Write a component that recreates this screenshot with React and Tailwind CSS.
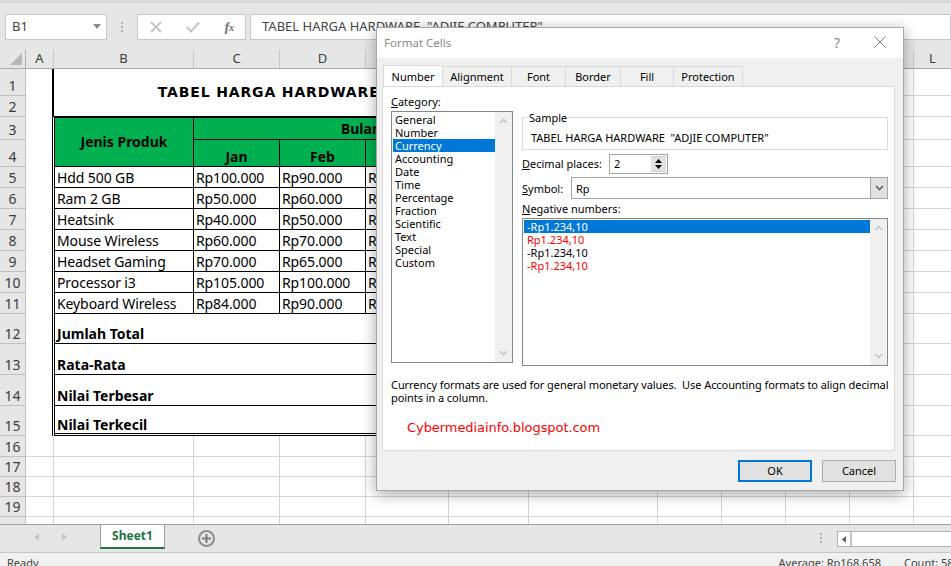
import React from "react";

const SHEET = { fontFamily: '"Noto Sans", sans-serif' };

const products = [
  ["Hdd 500 GB", "Rp100.000", "Rp90.000", "Rp80.000", "Rp85.000"],
  ["Ram 2 GB", "Rp50.000", "Rp60.000", "Rp70.000", "Rp65.000"],
  ["Heatsink", "Rp40.000", "Rp50.000", "Rp45.000", "Rp40.000"],
  ["Mouse Wireless", "Rp60.000", "Rp70.000", "Rp65.000", "Rp60.000"],
  ["Headset Gaming", "Rp70.000", "Rp65.000", "Rp60.000", "Rp70.000"],
  ["Processor i3", "Rp105.000", "Rp100.000", "Rp95.000", "Rp90.000"],
  ["Keyboard Wireless", "Rp84.000", "Rp90.000", "Rp85.000", "Rp80.000"],
];
const totals = ["Jumlah Total", "Rata-Rata", "Nilai Terbesar", "Nilai Terkecil"];
const cols = ["A", "B", "C", "D", "E", "F", "G", "H", "I", "J", "K", "L"];
const categories = ["General", "Number", "Currency", "Accounting", "Date", "Time", "Percentage", "Fraction", "Scientific", "Text", "Special", "Custom"];

const grid = "border-r border-b border-[#d4d4d4]";
const RowHead = ({ n }) => (
  <div className={`bg-[#e6e6e6] border-r border-b border-[#c0c0c0] flex justify-center text-[14px] leading-[19px] text-[#3c3c3c] overflow-hidden ${n === 20 ? "items-start pt-[3px]" : "items-end"}`}>{n}</div>
);
const ABlank = () => <div className="border-r border-white shadow-[inset_-1px_0_0_black]" />;
const Blank = () => <div className={grid} />;
const Blanks = ({ n }) => Array.from({ length: n }, (_, i) => <Blank key={i} />);
const Chevron = ({ up, color = "#c4c4c4" }) => (
  <svg width="9" height="6" viewBox="0 0 9 6" fill="none" stroke={color} strokeWidth="1.6">
    <path d={up ? "M1 5 L4.5 1.5 L8 5" : "M1 1 L4.5 4.5 L8 1"} />
  </svg>
);
const Scroll = () => (
  <div className="w-[17px] bg-[#f0f0f0] flex flex-col justify-between items-center py-[6px] shrink-0">
    <Chevron up />
    <Chevron />
  </div>
);

function Sheet() {
  return (
    <div className="grid flex-1 overflow-hidden grid-cols-[26px_28px_140px_86px_86px_83px_80px_129px_64px_64px_64px_64px_38px] grid-rows-[19px_27px_21px_23px_27px_21px_21px_21px_21px_21px_21px_21px_30px_31px_31px_30px_21px_20px_20px_20px_8px]" style={SHEET}>
      <div className="bg-[#e6e6e6] border-r border-b border-[#b0b0b0] flex items-end justify-end pr-[3px] pb-[3px]">
        <svg width="12" height="12" viewBox="0 0 12 12"><path d="M12 0V12H0Z" fill="#b7b7b7" /></svg>
      </div>
      {cols.map((c) => (
        <div key={c} className="bg-[#e6e6e6] border-r border-b border-b-[#a8a8a8] border-r-[#c6c6c6] flex items-center justify-center text-[13px] text-[#3c3c3c]">{c}</div>
      ))}

      <RowHead n={1} />
      <div className="border-r border-black shadow-[inset_-1px_0_0_black]" />
      <div className="col-span-6 row-span-2 bg-white border-b border-black flex items-center justify-center text-[14px] font-bold tracking-[0.85px] text-black whitespace-pre" style={{ fontFamily: '"DejaVu Sans", sans-serif' }}>TABEL HARGA HARDWARE  "ADJIE COMPUTER"</div>
      <Blanks n={5} />
      <RowHead n={2} />
      <div className="border-r border-black shadow-[inset_-1px_0_0_black]" />
      <Blanks n={5} />

      <RowHead n={3} />
      <ABlank />
      <div className="row-span-2 bg-[#00b050] border-l border-t border-r border-b border-black flex items-center justify-center pb-[2px] text-[14px] font-bold text-black">Jenis Produk</div>
      <div className="col-span-4 bg-[#00b050] border-t border-r border-b border-black flex items-center justify-center text-[14px] font-bold text-black">Bulan</div>
      <Blanks n={6} />

      <RowHead n={4} />
      <ABlank />
      {["Jan", "Feb", "Mar", "Apr"].map((m) => (
        <div key={m} className="bg-[#00b050] border-r border-b border-black flex items-end justify-center text-[14px] font-bold leading-[19px] text-black">{m}</div>
      ))}
      <Blanks n={6} />

      {products.map((p, i) => (
        <React.Fragment key={p[0]}>
          <RowHead n={5 + i} />
          <ABlank />
          {p.map((v, j) => (
            <div key={j} className={`border-r border-b border-black flex items-end pl-[2px] text-[14px] leading-[18px] tracking-[-0.1px] text-black whitespace-nowrap overflow-hidden ${j === 0 ? "border-l" : ""}`}>{v}</div>
          ))}
          <Blanks n={6} />
        </React.Fragment>
      ))}

      {totals.map((t, i) => (
        <React.Fragment key={t}>
          <RowHead n={12 + i} />
          <ABlank />
          <div className={`col-span-5 border-l border-r border-b border-black flex items-end pl-[2px] text-[14px] font-bold leading-[18px] text-black ${i === 3 ? "shadow-[inset_0_-1px_0_white,inset_0_-2px_0_black] pb-[1px]" : ""}`}>{t}</div>
          <Blanks n={6} />
        </React.Fragment>
      ))}

      {[16, 17, 18, 19, 20].map((n) => (
        <React.Fragment key={n}>
          <RowHead n={n} />
          <Blanks n={12} />
        </React.Fragment>
      ))}
    </div>
  );
}

function Dialog() {
  return (
    <div className="absolute left-[376px] top-[27px] w-[528px] h-[464px] bg-[#f0f0f0] border border-[#a6a6a6] shadow-[0_3px_14px_rgba(0,0,0,0.35)] flex flex-col text-[11px] leading-[13px] text-black" style={SHEET}>
      <div className="h-[30px] bg-white flex items-center shrink-0 pl-[7px] pr-[17px] pb-[2px]">
        <span className="text-[11.5px] text-[#8a8a8a]">Format Cells</span>
        <span className="ml-auto mr-[34px] text-[14px] text-[#8a8a8a]">?</span>
        <svg width="12" height="12" viewBox="0 0 12 12" stroke="#808080" fill="none"><path d="M0.5 0.5 L11.5 11.5 M11.5 0.5 L0.5 11.5" /></svg>
      </div>
      <div className="flex ml-[6px] mt-[8px] h-[20px] shrink-0">
        <div className="w-[60px] h-[21px] -mt-[1px] bg-white border border-b-0 border-[#d9d9d9] flex items-center justify-center z-10">Number</div>
        {[["Alignment", "w-[69px]"], ["Font", "w-[54px]"], ["Border", "w-[55px]"], ["Fill", "w-[53px]"], ["Protection", "w-[69px]"]].map(([t, w]) => (
          <div key={t} className={`${w} border border-l-0 border-b-0 border-[#d9d9d9] flex items-center justify-center`}>{t}</div>
        ))}
      </div>
      <div className="ml-[5px] w-[513px] h-[365px] bg-white border border-[#d9d9d9] flex flex-col pl-[8px] shrink-0">
        <div className="flex gap-[9px]">
          <div className="w-[122px] shrink-0 flex flex-col">
            <div className="mt-[8px] h-[16px]"><u>C</u>ategory:</div>
            <div className="h-[252px] border border-[#828790] flex pl-[1px]">
              <div className="flex-1 pt-[1px]">
                {categories.map((c) => (
                  <div key={c} className={`h-[13px] pl-[2px] whitespace-nowrap ${c === "Currency" ? "bg-[#0078d7] text-white" : ""}`}>{c}</div>
                ))}
              </div>
              <Scroll />
            </div>
          </div>
          <div className="w-[366px] shrink-0 flex flex-col">
            <fieldset className="mt-[24px] h-[39px] border border-[#dcdcdc] pl-[8px]">
              <legend className="-ml-[3px] px-[1px] leading-[13px]">Sample</legend>
              <div className="pt-[7px] whitespace-pre">TABEL HARGA HARDWARE  "ADJIE COMPUTER"</div>
            </fieldset>
            <div className="flex items-center h-[19px] mt-[4px]">
              <span className="w-[87px]"><u>D</u>ecimal places:</span>
              <div className="w-[59px] h-[20px] border border-[#a6a6a6] flex items-center pl-[4px] justify-between">
                <span>2</span>
                <div className="w-[15px] h-[16px] mr-[1px] bg-[#e1e1e1] flex flex-col justify-between items-center py-[2px] border-y border-[#cfcfcf]">
                  <svg width="7" height="4" viewBox="0 0 7 4"><path d="M0 4 L3.5 0 L7 4Z" fill="black" /></svg>
                  <svg width="7" height="4" viewBox="0 0 7 4"><path d="M0 0 L3.5 4 L7 0Z" fill="black" /></svg>
                </div>
              </div>
            </div>
            <div className="flex items-center h-[22px] mt-[4px]">
              <span className="w-[49px]"><u>S</u>ymbol:</span>
              <div className="w-[317px] h-[22px] border border-[#a6a6a6] flex items-center pl-[4px] justify-between">
                <span>Rp</span>
                <div className="w-[17px] h-[20px] bg-[#e1e1e1] border-l border-[#a6a6a6] flex items-center justify-center">
                  <Chevron color="#606060" />
                </div>
              </div>
            </div>
            <div className="mt-[2px] h-[17px] leading-[15px]"><u>N</u>egative numbers:</div>
            <div className="w-[366px] h-[148px] border border-[#828790] flex pl-[1px]">
              <div className="flex-1 pt-[1px]">
                <div className="h-[13px] pl-[3px] bg-[#0078d7] text-white">-Rp1.234,10</div>
                <div className="h-[13px] pl-[3px] text-[#ff0000]">Rp1.234,10</div>
                <div className="h-[13px] pl-[3px]">-Rp1.234,10</div>
                <div className="h-[13px] pl-[3px] text-[#ff0000]">-Rp1.234,10</div>
              </div>
              <Scroll />
            </div>
          </div>
        </div>
        <div className="mt-[12px] tracking-[-0.07px] whitespace-pre">
          {"Currency formats are used for general monetary values.  Use Accounting formats to align decimal\npoints in a column."}
        </div>
        <div className="ml-[16px] mt-[16px] text-[13px] leading-[16px] tracking-[-0.07px] text-[#ff0000] whitespace-nowrap" style={{ fontFamily: '"DejaVu Sans", sans-serif' }}>Cybermediainfo.blogspot.com</div>
      </div>
      <div className="flex justify-end gap-[10px] mt-[9px] mr-[7px]">
        <div className="w-[74px] h-[22px] pb-[2px] bg-[#e1e1e1] border-2 border-[#0078d7] flex items-center justify-center">OK</div>
        <div className="w-[74px] h-[22px] pb-[2px] bg-[#e1e1e1] border border-[#adadad] flex items-center justify-center">Cancel</div>
      </div>
    </div>
  );
}

export default function App() {
  return (
    <div className="relative w-[951px] h-[566px] overflow-hidden flex flex-col bg-white" style={SHEET}>
      <div className="h-[50px] shrink-0 bg-[#e6e6e6] border-t-[3px] border-t-[#d8d8d8] flex items-center pl-[5px] gap-[4px]">
        <div className="w-[102px] h-[26px] bg-white border border-[#c8c8c8] flex items-center justify-between pl-[6px] pr-[5px] text-[13px] text-[#444]">
          <span>B1</span>
          <svg width="8" height="5" viewBox="0 0 8 5"><path d="M0 0H8L4 5Z" fill="#8a8a8a" /></svg>
        </div>
        <div className="w-[22px] flex flex-col items-center gap-[2px]">
          <span className="w-[2px] h-[2px] bg-[#b0b0b0]" />
          <span className="w-[2px] h-[2px] bg-[#b0b0b0]" />
          <span className="w-[2px] h-[2px] bg-[#b0b0b0]" />
        </div>
        <div className="w-[109px] h-[26px] bg-white border border-[#c8c8c8] flex items-center pl-[12px] pr-[11px] justify-between">
          <svg width="12" height="12" viewBox="0 0 12 12" stroke="#c6c6c6" strokeWidth="2" fill="none"><path d="M1 1 L11 11 M11 1 L1 11" /></svg>
          <svg width="14" height="12" viewBox="0 0 14 12" stroke="#c6c6c6" strokeWidth="2" fill="none"><path d="M1 6 L5 10.5 L13 1.5" /></svg>
          <span className="text-[13px] italic text-[#6a6a6a] font-bold leading-none" style={{ fontFamily: '"Liberation Serif", serif' }}>f<span className="text-[10px]">x</span></span>
        </div>
        <div className="flex-1 h-[26px] bg-white border border-[#c8c8c8] flex items-center pl-[11px] text-[13px] text-[#444] whitespace-pre">TABEL HARGA HARDWARE  "ADJIE COMPUTER"</div>
      </div>

      <Sheet />

      <div className="h-[29px] shrink-0 bg-[#e6e6e6] border-t border-t-[#a0a0a0] border-b border-b-[#c6c6c6] flex items-start">
        <div className="w-[100px] h-[24px] flex items-center justify-center gap-[23px]">
          <svg width="5" height="8" viewBox="0 0 5 8"><path d="M5 0V8L0 4Z" fill="#c6c6c6" /></svg>
          <svg width="5" height="8" viewBox="0 0 5 8"><path d="M0 0V8L5 4Z" fill="#c6c6c6" /></svg>
        </div>
        <div className="w-[65px] h-[24px] bg-white border-x border-[#a0a0a0] border-b-2 border-b-[#217346] flex items-center justify-center text-[12px] font-bold text-[#217346]">Sheet1</div>
        <div className="ml-[33px] mt-[5px] w-[17px] h-[17px] rounded-full border-2 border-[#8c8c8c] flex items-center justify-center">
          <svg width="9" height="9" viewBox="0 0 9 9" stroke="#7a7a7a" strokeWidth="2"><path d="M4.5 0V9M0 4.5H9" /></svg>
        </div>
        <div className="ml-[605px] mt-[8px] flex flex-col gap-[2px]">
          <span className="w-[2px] h-[2px] bg-[#b0b0b0]" />
          <span className="w-[2px] h-[2px] bg-[#b0b0b0]" />
          <span className="w-[2px] h-[2px] bg-[#b0b0b0]" />
        </div>
        <div className="ml-[15px] mt-[6px] flex-1 h-[16px] bg-white border border-r-0 border-[#b0b0b0] flex items-center">
          <div className="w-[14px] h-full border-r-2 border-[#c6c6c6] flex items-center justify-center">
            <svg width="4" height="7" viewBox="0 0 4 7"><path d="M4 0V7L0 3.5Z" fill="#606060" /></svg>
          </div>
        </div>
      </div>

      <div className="h-[13px] shrink-0 bg-[#f1f1f1] flex items-start pl-[7px] pt-[2px] text-[11px] leading-[16px] text-[#444] overflow-hidden whitespace-nowrap">
        <span>Ready</span>
        <span className="ml-[740px]">Average: Rp168.658</span>
        <span className="ml-[23px]">Count: 58</span>
      </div>

      <Dialog />
    </div>
  );
}
